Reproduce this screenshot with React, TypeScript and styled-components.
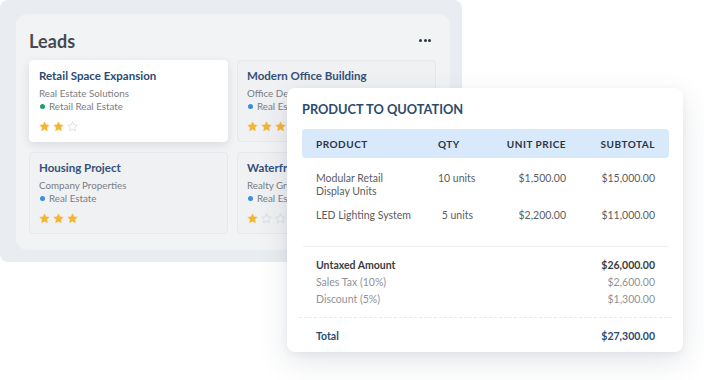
import React from "react";
import styled, { createGlobalStyle } from "styled-components";

const GlobalStyle = createGlobalStyle`
  html, body { margin: 0; padding: 0; background: #ffffff; }
  body { font-family: Lato, "Open Sans", sans-serif; -webkit-font-smoothing: antialiased; }
  * { box-sizing: border-box; }
`;

const Stage = styled.div`
  position: relative;
  width: 704px;
  height: 380px;
  overflow: hidden;
  background: #ffffff;
`;

const LeadsFrame = styled.div`
  width: 462px;
  height: 262px;
  background: #e9edf2;
  border-radius: 8px;
  padding: 14px 12px 12px 16px;
`;

const LeadsPanel = styled.section`
  width: 434px;
  height: 236px;
  background: #f2f3f5;
  border-radius: 12px;
  padding: 7px 14px 16px 13px;
  display: flex;
  flex-direction: column;
`;

const PanelHeader = styled.div`
  height: 40px;
  display: flex;
  align-items: center;
  justify-content: space-between;
  padding-right: 5px;
`;

const PanelTitle = styled.h2`
  margin: 0;
  font-size: 18px;
  font-weight: 700;
  color: #474a4f;
  letter-spacing: 0.1px;
`;

const MoreDots = styled.div`
  display: flex;
  gap: 1.5px;
  span {
    width: 3px;
    height: 3px;
    border-radius: 50%;
    background: #2a3646;
  }
`;

const CardGrid = styled.div`
  display: grid;
  grid-template-columns: 199px 199px;
  grid-auto-rows: 82px;
  column-gap: 9px;
  row-gap: 10px;
`;

const LeadCard = styled.div<{ $active?: boolean }>`
  background: ${(p) => (p.$active ? "#ffffff" : "#f0f1f3")};
  border: 1px solid ${(p) => (p.$active ? "#ffffff" : "#e7e8eb")};
  border-radius: 4px;
  box-shadow: ${(p) => (p.$active ? "0 3px 10px rgba(40, 50, 70, 0.12)" : "none")};
  padding: 8px 9px;
  display: flex;
  flex-direction: column;
`;

const LeadTitle = styled.div<{ $active?: boolean }>`
  font-size: 11.5px;
  line-height: 14px;
  font-weight: 700;
  color: ${(p) => (p.$active ? "#2a4a72" : "#34507a")};
  white-space: nowrap;
`;

const LeadCompany = styled.div`
  margin-top: 4px;
  font-size: 9.8px;
  line-height: 13px;
  color: #7a7d82;
  white-space: nowrap;
`;

const LeadTag = styled.div`
  display: flex;
  align-items: center;
  gap: 4px;
  font-size: 9.8px;
  line-height: 13px;
  color: #7a7d82;
  white-space: nowrap;
`;

const Dot = styled.span<{ $color: string }>`
  width: 5px;
  height: 5px;
  border-radius: 50%;
  background: ${(p) => p.$color};
  margin-left: 1px;
`;

const Stars = styled.div`
  margin-top: 6px;
  display: flex;
  gap: 3px;
  height: 14px;
  align-items: center;
`;

const QuoteCard = styled.section`
  position: absolute;
  left: 287px;
  top: 88px;
  width: 396px;
  height: 264px;
  background: #ffffff;
  border-radius: 8px;
  box-shadow: 0 10px 30px rgba(40, 60, 90, 0.13), 0 2px 6px rgba(40, 60, 90, 0.06);
  padding: 12px 14px 0 15px;
  display: flex;
  flex-direction: column;
`;

const QuoteTitle = styled.h3`
  margin: 0 0 11px;
  font-size: 12.8px;
  line-height: 18px;
  font-weight: 700;
  color: #2b4a70;
  letter-spacing: 0;
`;

const cols = "122px 35px 93px 89px";

const HeaderRow = styled.div`
  display: grid;
  grid-template-columns: ${cols};
  align-items: center;
  height: 29px;
  padding: 0 14px;
  background: #d8e9fb;
  border-radius: 4px;
  font-size: 10px;
  font-weight: 700;
  color: #2e3540;
  letter-spacing: 0.5px;
`;

const Cell = styled.div<{ $align?: "left" | "right" }>`
  text-align: ${(p) => p.$align || "left"};
  white-space: nowrap;
`;

const Rows = styled.div`
  display: flex;
  flex-direction: column;
  gap: 11px;
  padding: 14px 14px 0;
`;

const ItemRow = styled.div`
  display: grid;
  grid-template-columns: ${cols};
  align-items: start;
  font-size: 10.5px;
  line-height: 13px;
  color: #5a5d62;
`;

const ProductName = styled.div`
  width: 102px;
  white-space: normal;
`;

const Divider = styled.div<{ $dashed?: boolean }>`
  margin: ${(p) => (p.$dashed ? "9px -3px 0" : "24px 1px 0")};
  border-top: 1px ${(p) => (p.$dashed ? "dashed" : "solid")} ${(p) => (p.$dashed ? "#e6e9ee" : "#eef0f3")};
`;

const Summary = styled.div`
  padding: 10px 14px 0;
  display: flex;
  flex-direction: column;
`;

const SumRow = styled.div<{ $kind: "strong" | "muted" | "total" }>`
  display: flex;
  justify-content: space-between;
  font-size: 10.5px;
  line-height: 17px;
  font-weight: ${(p) => (p.$kind === "muted" ? 400 : 700)};
  color: ${(p) =>
    p.$kind === "muted" ? "#8f9297" : p.$kind === "total" ? "#2b4a70" : "#3a3d42"};
`;

const TotalWrap = styled.div`
  padding: 10px 14px 0;
`;

const Star: React.FC<{ filled: boolean }> = ({ filled }) => (
  <svg width="11" height="11" viewBox="0 0 24 24" aria-hidden>
    <path
      d="M12 1.8l3.1 6.6 7.2.9-5.3 5 1.4 7.1L12 17.9l-6.4 3.5L7 14.3l-5.3-5 7.2-.9z"
      fill={filled ? "#f5b533" : "none"}
      stroke={filled ? "#f5b533" : "#d3d6db"}
      strokeWidth={filled ? 1 : 1.6}
      strokeLinejoin="round"
    />
  </svg>
);

type Lead = {
  title: string;
  company: string;
  tag: string;
  dot: string;
  rating: number;
  active?: boolean;
};

const leads: Lead[] = [
  { title: "Retail Space Expansion", company: "Real Estate Solutions", tag: "Retail Real Estate", dot: "#1f9d6b", rating: 2, active: true },
  { title: "Modern Office Building", company: "Office Developers", tag: "Real Estate", dot: "#3a8ee0", rating: 3 },
  { title: "Housing Project", company: "Company Properties", tag: "Real Estate", dot: "#3a8ee0", rating: 3 },
  { title: "Waterfront Villas", company: "Realty Group", tag: "Real Estate", dot: "#3a8ee0", rating: 1 },
];

const items = [
  { name: "Modular Retail Display Units", qty: "10 units", price: "$1,500.00", subtotal: "$15,000.00" },
  { name: "LED Lighting System", qty: "5 units", price: "$2,200.00", subtotal: "$11,000.00" },
];

export default function App() {
  return (
    <>
      <GlobalStyle />
      <Stage>
        <LeadsFrame>
          <LeadsPanel>
            <PanelHeader>
              <PanelTitle>Leads</PanelTitle>
              <MoreDots>
                <span />
                <span />
                <span />
              </MoreDots>
            </PanelHeader>
            <CardGrid>
              {leads.map((l) => (
                <LeadCard key={l.title} $active={l.active}>
                  <LeadTitle $active={l.active}>{l.title}</LeadTitle>
                  <LeadCompany>{l.company}</LeadCompany>
                  <LeadTag>
                    <Dot $color={l.dot} />
                    {l.tag}
                  </LeadTag>
                  <Stars>
                    {[0, 1, 2].map((i) => (
                      <Star key={i} filled={i < l.rating} />
                    ))}
                  </Stars>
                </LeadCard>
              ))}
            </CardGrid>
          </LeadsPanel>
        </LeadsFrame>

        <QuoteCard>
          <QuoteTitle>PRODUCT TO QUOTATION</QuoteTitle>
          <HeaderRow>
            <Cell>PRODUCT</Cell>
            <Cell>QTY</Cell>
            <Cell $align="right">UNIT PRICE</Cell>
            <Cell $align="right">SUBTOTAL</Cell>
          </HeaderRow>
          <Rows>
            {items.map((it) => (
              <ItemRow key={it.name}>
                <ProductName>{it.name}</ProductName>
                <Cell $align="right">{it.qty}</Cell>
                <Cell $align="right">{it.price}</Cell>
                <Cell $align="right">{it.subtotal}</Cell>
              </ItemRow>
            ))}
          </Rows>
          <Divider />
          <Summary>
            <SumRow $kind="strong">
              <span>Untaxed Amount</span>
              <span>$26,000.00</span>
            </SumRow>
            <SumRow $kind="muted">
              <span>Sales Tax (10%)</span>
              <span>$2,600.00</span>
            </SumRow>
            <SumRow $kind="muted">
              <span>Discount (5%)</span>
              <span>$1,300.00</span>
            </SumRow>
          </Summary>
          <Divider $dashed />
          <TotalWrap>
            <SumRow $kind="total">
              <span>Total</span>
              <span>$27,300.00</span>
            </SumRow>
          </TotalWrap>
        </QuoteCard>
      </Stage>
    </>
  );
}
